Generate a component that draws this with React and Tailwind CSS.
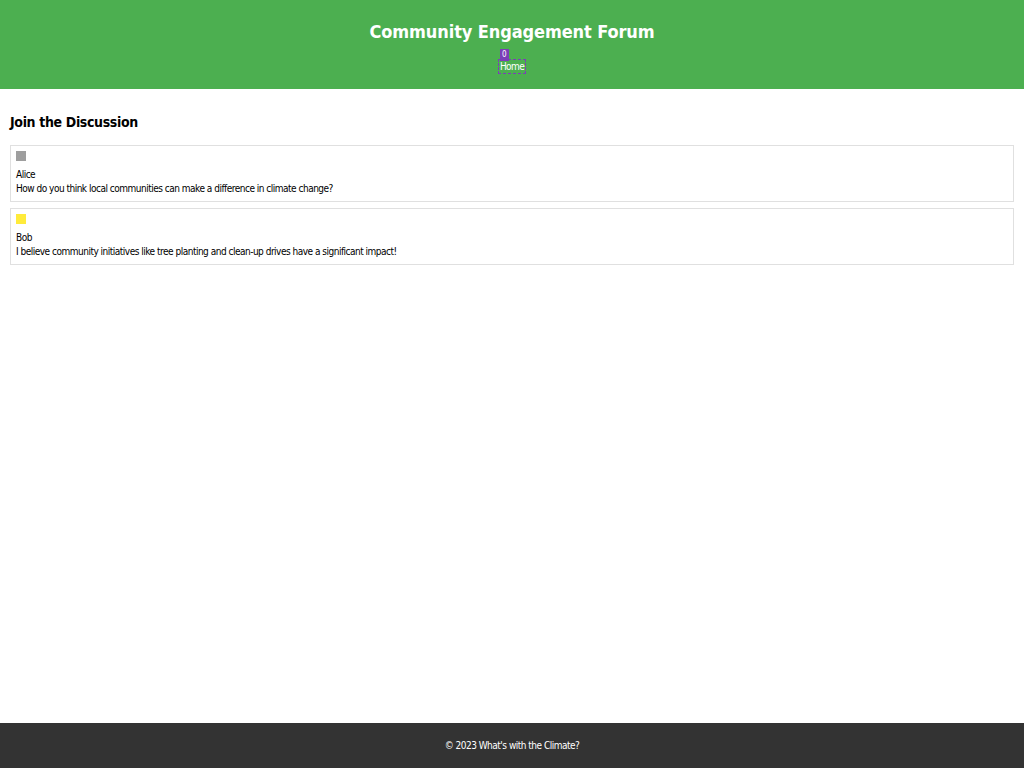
export default function App() {
  const posts = [
    { name: "Alice", color: "bg-[#9e9e9e]", text: "How do you think local communities can make a difference in climate change?" },
    { name: "Bob", color: "bg-[#ffeb3b]", text: "I believe community initiatives like tree planting and clean-up drives have a significant impact!" },
  ];
  return (
    <div className="flex min-h-screen flex-col bg-white font-['DejaVu_Sans_Condensed','DejaVu_Sans',sans-serif] text-black">
      <header className="flex h-[89px] flex-col items-center bg-[#4caf50] pt-[21px] text-white">
        <h1 className="text-[18px] font-bold leading-[22px] tracking-[-0.1px]">Community Engagement Forum</h1>
        <nav className="mt-[17px] flex justify-center">
          <span className="relative px-[1px] text-[10px] leading-[13px] tracking-[-0.6px] outline-1 outline-dashed outline-[#7b3fb8]">
            <span className="absolute left-[1px] top-[-11px] block h-[12px] w-[9px] bg-[#7b3fb8] text-center text-[8px] leading-[12px] tracking-normal text-white">0</span>
            Home
          </span>
        </nav>
      </header>
      <main className="flex-1 p-[10px]">
        <h2 className="mt-[14px] mb-[14px] text-[14px] font-bold leading-[18px] tracking-[-0.35px]">Join the Discussion</h2>
        <div className="flex flex-col gap-[6px]">
          {posts.map((p) => (
            <div key={p.name} className="border border-[#e0e0e0] px-[5px] pt-[5px] pb-[5px] text-[10px] leading-[14px] tracking-[-0.5px]">
              <div className={`h-[10px] w-[10px] ${p.color}`} />
              <div className="mt-[7px]">{p.name}</div>
              <div>{p.text}</div>
            </div>
          ))}
        </div>
      </main>
      <footer className="flex h-[45px] items-center justify-center bg-[#333333] text-[10px] tracking-[-0.5px] text-white">
        © 2023 What's with the Climate?
      </footer>
    </div>
  );
}
